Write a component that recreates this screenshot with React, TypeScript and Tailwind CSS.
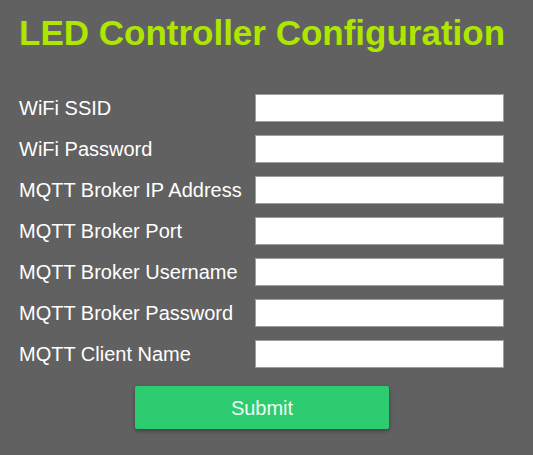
const fields = [
  { label: 'WiFi SSID', type: 'text' },
  { label: 'WiFi Password', type: 'password' },
  { label: 'MQTT Broker IP Address', type: 'text' },
  { label: 'MQTT Broker Port', type: 'text' },
  { label: 'MQTT Broker Username', type: 'text' },
  { label: 'MQTT Broker Password', type: 'password' },
  { label: 'MQTT Client Name', type: 'text' },
];

export default function App() {
  return (
    <main className="min-h-screen bg-[#616161] pl-[19px] pt-[13px] font-['Liberation_Sans',Arial,sans-serif] text-white">
      <h1 className="text-[35px] font-bold leading-[40px] text-[#aee600]">LED Controller Configuration</h1>
      <form className="mt-[41px] w-[485px]">
        <div className="grid grid-cols-[236px_249px] gap-y-[13px]">
          {fields.map((f) => (
            <label key={f.label} className="contents">
              <span className="flex h-[28px] items-center text-[20px]">{f.label}</span>
              <input
                type={f.type}
                className="h-[28px] w-[249px] border border-[#9e9e9e] bg-white px-2 text-black outline-none"
              />
            </label>
          ))}
        </div>
        <div className="mt-[18px] flex pl-[116px]">
          <button
            type="button"
            className="h-[43px] w-[254px] rounded-[2px] bg-[#2ecc71] text-[20px] text-[#eefaf2] shadow-[0_2px_4px_rgba(0,0,0,0.35)]"
          >
            Submit
          </button>
        </div>
      </form>
    </main>
  );
}
